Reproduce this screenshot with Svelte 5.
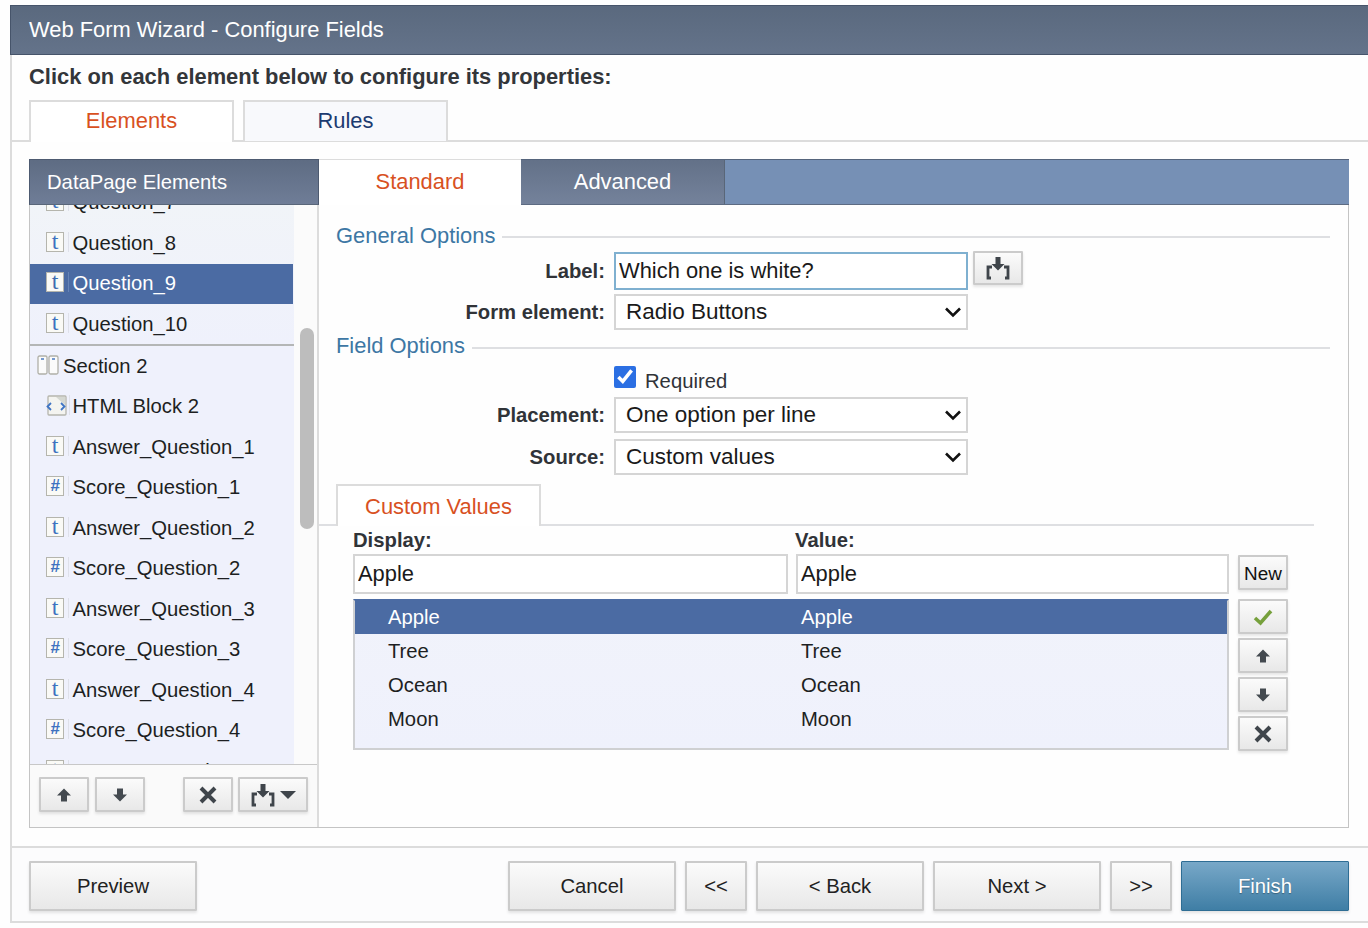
<script>
  const items = [
    { name: 'Question_7', icon: 't' },
    { name: 'Question_8', icon: 't' },
    { name: 'Question_9', icon: 't', selected: true },
    { name: 'Question_10', icon: 't', last: true },
    { name: 'Section 2', icon: 'section' },
    { name: 'HTML Block 2', icon: 'html' },
    { name: 'Answer_Question_1', icon: 't' },
    { name: 'Score_Question_1', icon: '#' },
    { name: 'Answer_Question_2', icon: 't' },
    { name: 'Score_Question_2', icon: '#' },
    { name: 'Answer_Question_3', icon: 't' },
    { name: 'Score_Question_3', icon: '#' },
    { name: 'Answer_Question_4', icon: 't' },
    { name: 'Score_Question_4', icon: '#' },
    { name: 'Answer_Question_5', icon: 't' }
  ];
  const values = ['Apple', 'Tree', 'Ocean', 'Moon'];
</script>

{#snippet up()}
  <svg class="ico" width="16" height="16" viewBox="0 0 16 16"><path d="M8 1.500 15 8.500H11V14.500H5V8.500H1Z" fill="#444a50"/></svg>
{/snippet}
{#snippet down()}
  <svg class="ico" width="16" height="16" viewBox="0 0 16 16"><path d="M8 14.500 15 7.500H11V1.500H5V7.500H1Z" fill="#444a50"/></svg>
{/snippet}
{#snippet cross()}
  <svg class="ico" width="20" height="20" viewBox="0 0 20 20"><path d="M3 3 17 17M17 3 3 17" stroke="#3f454b" stroke-width="4" fill="none"/></svg>
{/snippet}
{#snippet insert()}
  <svg class="ico" width="24" height="24" viewBox="0 0 24 24">
    <path d="M12 14.500 5.500 8H9.500V1H14.500V8H18.500Z" fill="#3f454b"/>
    <path d="M6 11H2V22H5M18 11H22V22H19" stroke="#3f454b" stroke-width="2.800" fill="none"/>
  </svg>
{/snippet}
{#snippet chevron()}
  <svg class="chev" width="18" height="12" viewBox="0 0 18 12"><path d="M2 2.500 9 9.500 16 2.500" stroke="#111" stroke-width="2.600" fill="none"/></svg>
{/snippet}

<div class="page">
  <div class="window">
    <header class="title">Web Form Wizard - Configure Fields</header>
    <div class="body">
      <p class="intro">Click on each element below to configure its properties:</p>
      <div class="top-tabs">
        <div class="top-tab active">Elements</div>
        <div class="top-tab">Rules</div>
      </div>

      <div class="panel">
        <aside class="side">
          <div class="side-head">DataPage Elements</div>
          <div class="side-scroll">
            <ul class="tree">
              {#each items as item}
                <li class="row" class:sel={item.selected} class:last={item.last} class:sec={item.icon === 'section'}>
                  {#if item.icon === 't' || item.icon === '#'}
                    <span class="type" class:hash={item.icon === '#'}>{item.icon}</span>
                    <span class="sep"></span>
                  {:else if item.icon === 'section'}
                    <svg class="sec-ico" width="22" height="20" viewBox="0 0 22 20">
                      <rect x="1" y="1" width="9" height="18" rx="1.500" fill="#fbfbfb" stroke="#b0b0a8" stroke-width="1.300"/>
                      <rect x="12" y="1" width="9" height="18" rx="1.500" fill="#fbfbfb" stroke="#b0b0a8" stroke-width="1.300"/>
                      <path d="M4 4H7M15 4H18" stroke="#4a78c0" stroke-width="1.500"/>
                    </svg>
                  {:else}
                    <svg class="html-ico" width="21" height="21" viewBox="0 0 21 21">
                      <rect x="2" y="1" width="18" height="19" rx="1" fill="#f4f4f0" stroke="#b5b5ad" stroke-width="1.300"/>
                      <path d="M10 2H19V10Z" fill="#d5d8d2"/>
                      <path d="M5 8 1.500 11.500 5 15M15 8 18.500 11.500 15 15" stroke="#3f74c4" stroke-width="1.800" fill="none"/>
                    </svg>
                    <span class="sep tight"></span>
                  {/if}
                  <span class="name">{item.name}</span>
                </li>
              {/each}
            </ul>
            <div class="gutter"><div class="thumb"></div></div>
          </div>
          <div class="side-tools">
            <button class="btn tool">{@render up()}</button>
            <button class="btn tool">{@render down()}</button>
            <button class="btn tool push">{@render cross()}</button>
            <button class="btn tool wide">
              {@render insert()}
              <svg class="ico" width="16" height="8" viewBox="0 0 16 8"><path d="M0 0H16L8 8Z" fill="#3f454b"/></svg>
            </button>
          </div>
        </aside>

        <section class="main">
          <div class="main-tabs">
            <div class="main-tab on">Standard</div>
            <div class="main-tab">Advanced</div>
          </div>
          <div class="content">
            <div class="legend first"><span>General Options</span><i></i></div>
            <div class="field f-label">
              <label for="lbl">Label:</label>
              <input id="lbl" class="inp focus" value="Which one is white?" />
              <button class="btn insert-btn">{@render insert()}</button>
            </div>
            <div class="field f-form">
              <label for="fe">Form element:</label>
              <div class="sel-wrap">
                <select id="fe"><option>Radio Buttons</option></select>
                {@render chevron()}
              </div>
            </div>
            <div class="legend second"><span>Field Options</span><i></i></div>
            <div class="field f-req">
              <span></span>
              <div class="req"><input id="req" type="checkbox" checked /><label for="req">Required</label></div>
            </div>
            <div class="field f-place">
              <label for="pl">Placement:</label>
              <div class="sel-wrap">
                <select id="pl"><option>One option per line</option></select>
                {@render chevron()}
              </div>
            </div>
            <div class="field f-source">
              <label for="so">Source:</label>
              <div class="sel-wrap">
                <select id="so"><option>Custom values</option></select>
                {@render chevron()}
              </div>
            </div>

            <div class="cv-tabs"><div class="cv-tab">Custom Values</div></div>
            <div class="cv">
              <div class="cv-labels"><b>Display:</b><b class="val-label">Value:</b></div>
              <div class="cv-inputs">
                <input class="inp disp" value="Apple" />
                <input class="inp val" value="Apple" />
                <button class="btn new">New</button>
              </div>
              <div class="cv-list">
                <ul class="values">
                  {#each values as v, i}
                    <li class:sel={i === 0}><span>{v}</span><span>{v}</span></li>
                  {/each}
                </ul>
                <div class="cv-tools">
                  <button class="btn small">
                    <svg class="ico" width="20" height="18" viewBox="0 0 20 18"><path d="M2 10 7.500 15 18 3" stroke="#76a03c" stroke-width="3.600" fill="none"/></svg>
                  </button>
                  <button class="btn small">{@render up()}</button>
                  <button class="btn small">{@render down()}</button>
                  <button class="btn small">{@render cross()}</button>
                </div>
              </div>
            </div>
          </div>
        </section>
      </div>

      <footer class="foot">
        <button class="btn big">Preview</button>
        <span class="spring"></span>
        <button class="btn big">Cancel</button>
        <button class="btn mini">&lt;&lt;</button>
        <button class="btn big">&lt; Back</button>
        <button class="btn big">Next &gt;</button>
        <button class="btn mini">&gt;&gt;</button>
        <button class="btn big finish">Finish</button>
      </footer>
    </div>
  </div>
</div>

<style>
  :global(body) {
    margin: 0;
    background: #fefefe;
  }
  * {
    box-sizing: border-box;
  }
  .page {
    height: 928px;
    padding: 5px 0 0 10px;
    overflow: hidden;
    font-family: "Liberation Sans", Arial, sans-serif;
    font-size: 20.25px;
    color: #1d1f22;
  }
  .window {
    width: 1358px;
  }
  .title {
    height: 50px;
    padding-left: 18px;
    line-height: 47px;
    font-size: 21.9px;
    color: #fff;
    background: linear-gradient(#5a697e, #64738a);
    border: 1px solid #46546a;
    border-right: 0;
  }
  .body {
    height: 868px;
    border-left: 2px solid #dcdcdc;
    border-bottom: 2px solid #dcdcdc;
  }
  .intro {
    margin: 0;
    height: 45px;
    padding: 9px 0 0 17px;
    line-height: 25px;
    font-size: 21.9px;
    font-weight: 700;
    color: #33363a;
  }
  .top-tabs {
    display: flex;
    gap: 9px;
    height: 42px;
    padding-left: 17px;
    border-bottom: 2px solid #dcdcdc;
  }
  .top-tab {
    width: 205px;
    height: 41px;
    text-align: center;
    line-height: 38px;
    font-size: 21.9px;
    color: #1c3b70;
    background: #f8f9fc;
    border: 2px solid #dcdcdc;
    border-bottom: 0;
  }
  .top-tab.active {
    height: 42px;
    color: #d8511f;
    background: #fff;
  }
  .panel {
    display: flex;
    width: 1320px;
    height: 669px;
    margin: 17px 0 0 17px;
    border: 1px solid #c4c4c4;
    border-top: 0;
  }
  .side {
    display: flex;
    flex-direction: column;
    width: 289px;
    flex: none;
    border-right: 2px solid #dcdcdc;
  }
  .side-head {
    height: 46px;
    margin: 0 -2px 0 -1px;
    padding-left: 17px;
    line-height: 44px;
    color: #fff;
    background: linear-gradient(#5e6c83, #6f7d97);
    border: 1px solid #4d5a70;
    border-bottom: 1px solid #596679;
  }
  .side-scroll {
    display: flex;
    flex: 1;
    min-height: 0;
    overflow: hidden;
  }
  .tree {
    width: 264px;
    flex: none;
    margin: 0;
    padding: 0;
    list-style: none;
    overflow: hidden;
    background: linear-gradient(#f1f4f8, #eff1fc 140px);
  }
  .row {
    display: flex;
    align-items: center;
    height: 40.5px;
    padding: 0 0 0 16px;
    color: #1d1f22;
  }
  .row:first-child {
    margin-top: -22.5px;
  }
  .row.sel {
    width: 264px;
    margin-left: -1px;
    padding-left: 17px;
    color: #fff;
    background: #4b6ba3;
  }
  .row.last {
    height: 42px;
    border-bottom: 2px solid #b4b6b6;
  }
  .row.sec {
    padding-left: 7px;
  }
  .type {
    display: block;
    width: 18px;
    height: 20px;
    margin-top: -3px;
    text-align: center;
    line-height: 17px;
    font-family: "Liberation Serif", serif;
    font-size: 24px;
    color: #3e72c0;
    background: #fafaf6;
    border: 1px solid #b5b5ad;
  }
  .type.hash {
    font-family: "Liberation Sans", sans-serif;
    font-style: italic;
    font-weight: 700;
    font-size: 17px;
  }
  .row.sel .type {
    color: #3e6cb0;
  }
  .sep {
    width: 1px;
    height: 20px;
    margin: -3px 4px 0 3.500px;
    background: #dfe1ea;
  }
  .sep.tight {
    margin: -3px 3px 0 1.500px;
  }
  .row.sel .sep {
    background: #6684b6;
  }
  .sec-ico {
    margin: -3px 4px 0 0;
  }
  .html-ico {
    margin-top: -3px;
    flex: none;
  }
  .gutter {
    flex: 1;
    background: #fbfbfb;
    padding: 123px 0 0 6px;
  }
  .thumb {
    width: 14px;
    height: 201px;
    border-radius: 7px;
    background: #bdbdbd;
  }
  .side-tools {
    display: flex;
    align-items: flex-start;
    gap: 6px;
    height: 63px;
    padding: 12px 0 0 9px;
    background: #fafafa;
    border-top: 1px solid #c8c8c8;
  }
  .btn {
    display: inline-flex;
    align-items: center;
    justify-content: center;
    padding: 0;
    font: inherit;
    color: #222;
    background: linear-gradient(#fbfbfb, #e8e8e8);
    border: 2px solid #cbcbcb;
    border-radius: 1px;
    box-shadow: 0 2px 3px rgba(0, 0, 0, 0.1);
  }
  .tool {
    width: 50px;
    height: 35px;
  }
  .tool.push {
    margin-left: 32px;
  }
  .tool.wide {
    width: 70px;
    gap: 5px;
    margin-left: -1px;
  }
  .main {
    flex: 1;
    min-width: 0;
  }
  .main-tabs {
    display: flex;
    height: 46px;
    margin-right: -1px;
    background: #7690b5;
    border-top: 1px solid #55647c;
    border-bottom: 1px solid #5d6b82;
  }
  .main-tab {
    width: 204px;
    text-align: center;
    line-height: 43px;
    font-size: 21.9px;
    color: #fff;
    background: linear-gradient(#637188, #74829b);
    border-right: 1px solid #596678;
  }
  .main-tab.on {
    width: 202px;
    margin: -1px 0 -1px 0;
    height: 46px;
    line-height: 43px;
    color: #d8511f;
    background: #fff;
    border-right: 0;
    border-top: 1px solid #dcdcdc;
  }
  .content {
    padding: 0 18px 0 17px;
  }
  .legend {
    display: flex;
    align-items: center;
    gap: 7px;
    font-size: 21.9px;
    color: #3d77a4;
  }
  .legend i {
    flex: 1;
    height: 2px;
    background: #dedfe2;
    margin-top: 2px;
  }
  .legend.first {
    height: 26px;
    margin-top: 18px;
  }
  .legend.second {
    height: 25px;
    margin-top: 3px;
  }
  .legend.second i {
    margin-top: 4px;
  }
  .field {
    display: flex;
    align-items: center;
  }
  .field > label,
  .field > span {
    width: 269px;
    margin-right: 9px;
    flex: none;
    text-align: right;
    font-weight: 700;
    color: #303338;
  }
  .f-label { margin-top: 3px; height: 38px; }
  .f-form { margin-top: 4px; height: 36px; }
  .f-req { margin-top: 8px; height: 22px; }
  .f-place { margin-top: 9px; height: 36px; }
  .f-source { margin-top: 6px; height: 36px; }
  .inp {
    display: block;
    height: 100%;
    margin: 0;
    padding: 0 3px;
    font: inherit;
    font-size: 21.9px;
    color: #1a1a1a;
    background: #fff;
    border: 2px solid #d5d5d5;
    border-radius: 0;
    outline: 0;
  }
  .inp.focus {
    width: 354px;
    border: 2px solid #7fb0d0;
  }
  .insert-btn {
    align-self: flex-start;
    width: 50px;
    height: 34px;
    margin: -1px 0 0 5px;
  }
  .sel-wrap {
    position: relative;
    width: 354px;
    height: 100%;
  }
  select {
    display: block;
    width: 100%;
    height: 100%;
    padding: 0 30px 2px 10px;
    font: inherit;
    font-size: 22.5px;
    color: #1a1a1a;
    background: #fff;
    border: 2px solid #d5d5d5;
    border-radius: 0;
    appearance: none;
  }
  .chev {
    position: absolute;
    right: 6px;
    top: 12px;
    pointer-events: none;
  }
  .req {
    display: flex;
    align-items: center;
  }
  .req input {
    width: 22px;
    height: 22px;
    margin: 0 9px 0 0;
    accent-color: #2b6fe3;
  }
  .req label {
    margin-top: 8px;
    color: #303338;
  }
  .cv-tabs {
    height: 42px;
    margin: 9px 0 0 -17px;
    padding-left: 17px;
    width: 995px;
    border-bottom: 2px solid #dedfe2;
  }
  .cv-tab {
    width: 205px;
    height: 42px;
    text-align: center;
    line-height: 41px;
    font-size: 21.9px;
    color: #d8511f;
    background: #fff;
    border: 2px solid #dcdcdc;
    border-bottom: 0;
  }
  .cv {
    padding-left: 17px;
  }
  .cv-labels {
    display: flex;
    height: 28px;
    line-height: 28px;
    color: #303338;
  }
  .cv-labels b {
    width: 442px;
  }
  .cv-inputs {
    display: flex;
    align-items: flex-start;
    height: 40px;
  }
  .disp {
    width: 435px;
  }
  .val {
    width: 433px;
    margin-left: 8px;
  }
  .new {
    width: 50px;
    height: 35px;
    margin: 1px 0 0 9px;
    padding-top: 2px;
    font-size: 18.9px;
    color: #111;
  }
  .cv-list {
    display: flex;
    align-items: flex-start;
    margin-top: 5px;
    gap: 9px;
  }
  .values {
    width: 876px;
    height: 151px;
    margin: 0;
    padding: 0;
    list-style: none;
    background: linear-gradient(#f1f3fb, #eff1fc);
    border: 2px solid #cfd0d2;
    border-top-color: #4b6ba3;
  }
  .values li {
    display: flex;
    height: 34px;
    line-height: 34px;
    padding-left: 33px;
  }
  .values li span:first-child {
    width: 413px;
  }
  .values li.sel {
    height: 33px;
    line-height: 33px;
    color: #fff;
    background: #4b6ba3;
  }
  .cv-tools {
    display: flex;
    flex-direction: column;
    gap: 4px;
  }
  .small {
    width: 50px;
    height: 35px;
  }
  .foot {
    display: flex;
    gap: 9px;
    width: 1356px;
    height: 75px;
    margin-top: 18px;
    padding: 13px 19px 0 17px;
    background: #fcfcfd;
    border-top: 2px solid #dcdcdc;
    align-items: flex-start;
  }
  .spring {
    flex: 1;
  }
  .big {
    width: 168px;
    height: 50px;
    padding-top: 1px;
  }
  .mini {
    width: 62px;
    height: 50px;
    padding-top: 1px;
  }
  .finish {
    color: #fff;
    background: linear-gradient(#78a8c8, #3f7ea5);
    border: 1px solid #2e6d94;
    text-shadow: 0 1px 1px rgba(0, 0, 0, 0.3);
  }
</style>
